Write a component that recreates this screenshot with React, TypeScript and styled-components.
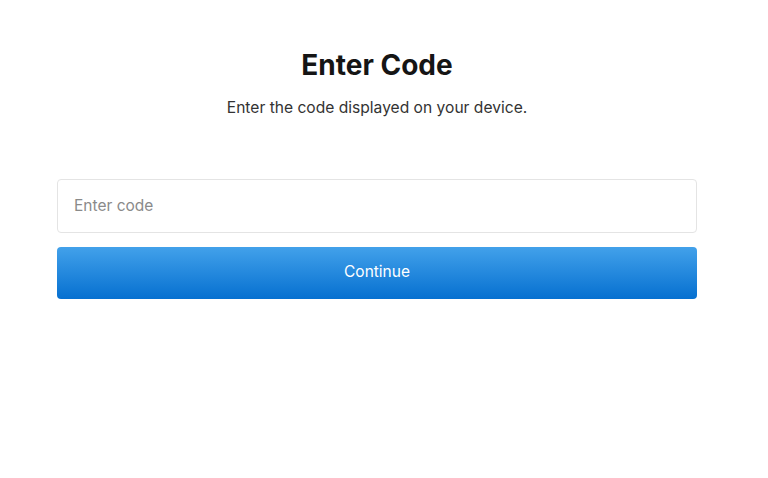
import styled, { createGlobalStyle } from 'styled-components'

const Global = createGlobalStyle`
  body {
    margin: 0;
    background: #ffffff;
    font-family: Inter, 'Noto Sans', sans-serif;
    color: #1a1a1a;
  }
`

export default function App() {
  return (
    <>
      <Global />
      <Page>
        <Title>Enter Code</Title>
        <Subtitle>Enter the code displayed on your device.</Subtitle>
        <Form>
          <CodeInput placeholder="Enter code" />
          <Button type="button">Continue</Button>
        </Form>
      </Page>
    </>
  )
}

const Page = styled.div`
  width: 640px;
  margin-left: 57px;
  padding-top: 46px;
  display: flex;
  flex-direction: column;
  align-items: center;
`
const Title = styled.h1`
  margin: 0;
  font-size: 28px;
  font-weight: 700;
  line-height: 38px;
  color: #151515;
`
const Subtitle = styled.p`
  margin: 14px 0 0;
  font-size: 15.6px;
  line-height: 20px;
  color: #333333;
`
const Form = styled.div`
  width: 100%;
  margin-top: 61px;
  display: flex;
  flex-direction: column;
  gap: 14px;
`
const CodeInput = styled.input`
  box-sizing: border-box;
  width: 100%;
  height: 54px;
  padding: 0 16px 2px;
  border: 1px solid #e4e4e4;
  border-radius: 4px;
  font-family: Inter, 'Noto Sans', sans-serif;
  font-size: 15.5px;
  color: #222;
  outline: none;
  &::placeholder {
    color: #8a8a8a;
  }
`
const Button = styled.button`
  width: 100%;
  height: 52px;
  padding: 0 0 4px;
  border: none;
  border-radius: 4px;
  background: linear-gradient(#42a1ea, #0670d0);
  color: #ffffff;
  font-family: Inter, 'Noto Sans', sans-serif;
  font-size: 15.5px;
  cursor: pointer;
`
